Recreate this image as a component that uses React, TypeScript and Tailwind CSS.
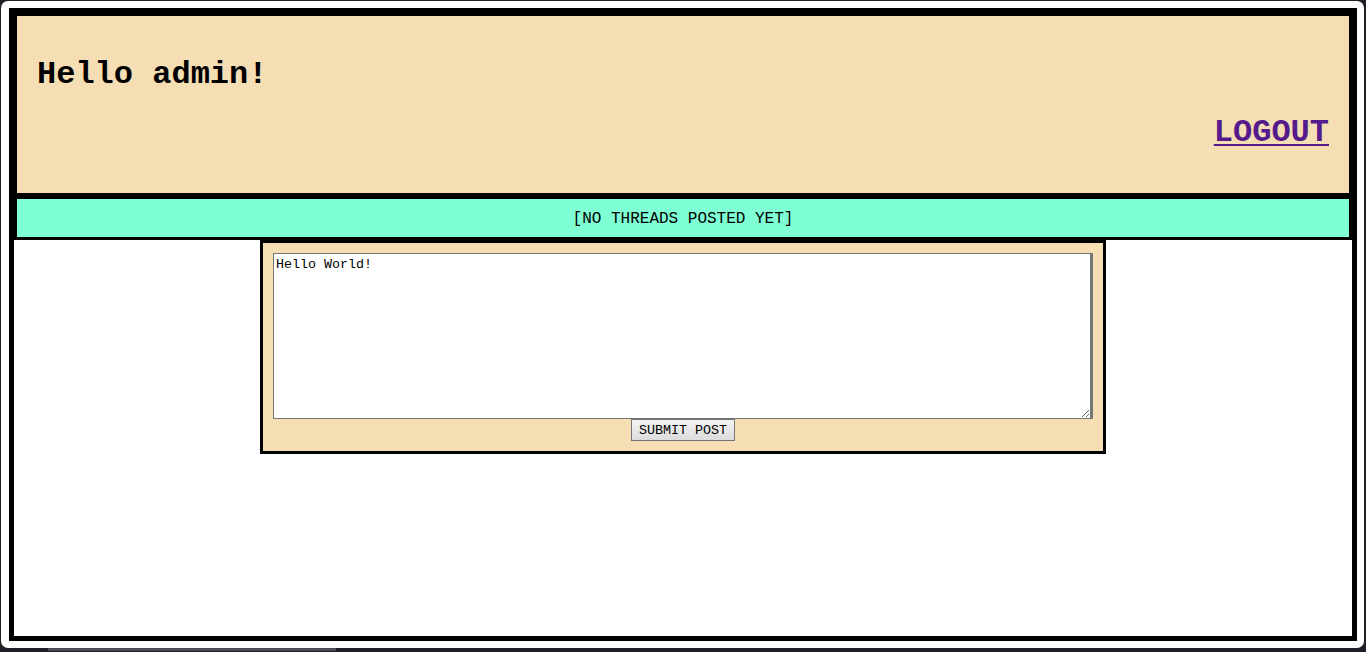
import { useState } from 'react';

const mono = "font-['Liberation_Mono','Courier_New',monospace]";

export default function App() {
  const [post, setPost] = useState('Hello World!');

  return (
    <div className="h-[652px] w-[1366px] bg-[#1d2026] pt-px pl-px pr-[2px] pb-[4px] flex flex-col overflow-hidden">
      <div className="flex-1 flex flex-col bg-white rounded-[7px] pt-[7px] pb-[7px] pl-[8px] pr-[7px]">
        <div className={`flex-1 flex flex-col border-[5px] border-black bg-white ${mono}`}>
          {/* header */}
          <div className="border-[3px] border-black bg-[#f5deb3] p-5">
            <h1 className="text-[32px] leading-[36.25px] font-bold text-black my-[21.44px]">Hello admin!</h1>
            <h1 className="text-[32px] leading-[36.25px] font-bold text-right my-[21.44px]">
              <a href="#" className="text-[#551a8b] underline decoration-2 underline-offset-[3px]">LOGOUT</a>
            </h1>
          </div>

          {/* threads */}
          <div className="border-[3px] border-black bg-[#7fffd4] pt-[11px] pb-[9px] text-center text-[16px] leading-[18px] text-black">
            [NO THREADS POSTED YET]
          </div>

          {/* new post */}
          <div className="w-[846px] mx-auto border-[3px] border-black bg-[#f5deb3] p-[10px] flex flex-col items-center">
            <textarea
              value={post}
              onChange={e => setPost(e.target.value)}
              className={`block w-full h-[166px] bg-white border border-r-[3px] border-[#767676] pt-[3px] px-[2px] text-[13.33px] leading-[15px] text-black ${mono}`}
            />
            <button className={`h-[22px] px-[7px] pt-px border border-[#767676] bg-gradient-to-b from-[#f3f3f3] to-[#dcdcdc] text-[13.33px] leading-[15px] text-black ${mono}`}>
              SUBMIT POST
            </button>
          </div>
        </div>
      </div>
      <div className="h-0 relative">
        <div className="absolute left-[47px] top-[0px] w-[288px] h-[3px] bg-[#4a4d52]" />
      </div>
    </div>
  );
}
